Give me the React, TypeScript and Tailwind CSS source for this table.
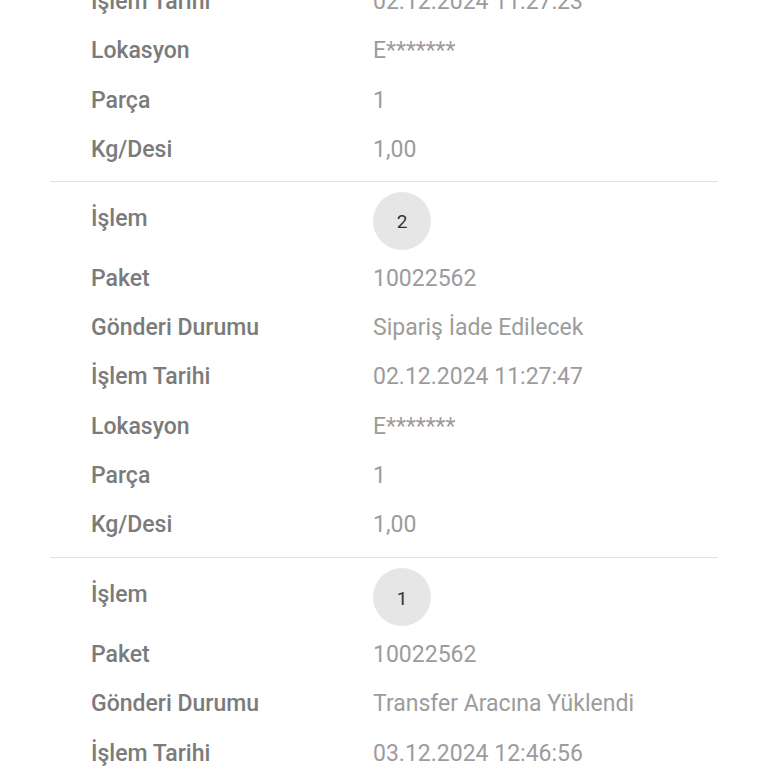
import React from "react";

type Row = [string, string];

const Label = ({ children }: { children: React.ReactNode }) => (
  <div className="w-[282px] shrink-0 text-[23px] font-medium text-[#7b7b7b]">{children}</div>
);
const Value = ({ children }: { children: React.ReactNode }) => (
  <div className="text-[23px] font-normal text-[#9c9c9c]">{children}</div>
);

function Rows({ rows }: { rows: Row[] }) {
  return (
    <>
      {rows.map(([l, v], i) => (
        <div key={i} className="flex h-[49.4px] items-center pl-[41px]">
          <Label>{l}</Label>
          <Value>{v}</Value>
        </div>
      ))}
    </>
  );
}

function Section({ n, rows }: { n: number; rows: Row[] }) {
  return (
    <div className="border-t border-[#e3e3e3] pb-[7px]">
      <div className="flex h-[72px] pl-[41px] pt-[10px]">
        <div className="w-[282px] shrink-0 pt-[10px] text-[23px] font-medium text-[#7b7b7b]">İşlem</div>
        <div className="flex h-[58px] w-[58px] items-center justify-center rounded-full bg-[#e6e6e6] pt-[3px] text-[19px] text-[#333]">
          {n}
        </div>
      </div>
      <Rows rows={rows} />
    </div>
  );
}

export default function App() {
  return (
    <div
      className="h-[768px] w-[768px] overflow-hidden bg-white"
      style={{ fontFamily: "Roboto, 'Noto Sans', sans-serif" }}
    >
      <div className="mx-[50px] -mt-[22.5px]">
        <div className="pb-[6px]">
          <Rows
            rows={[
              ["İşlem Tarihi", "02.12.2024 11:27:23"],
              ["Lokasyon", "E*******"],
              ["Parça", "1"],
              ["Kg/Desi", "1,00"],
            ]}
          />
        </div>
        <Section
          n={2}
          rows={[
            ["Paket", "10022562"],
            ["Gönderi Durumu", "Sipariş İade Edilecek"],
            ["İşlem Tarihi", "02.12.2024 11:27:47"],
            ["Lokasyon", "E*******"],
            ["Parça", "1"],
            ["Kg/Desi", "1,00"],
          ]}
        />
        <Section
          n={1}
          rows={[
            ["Paket", "10022562"],
            ["Gönderi Durumu", "Transfer Aracına Yüklendi"],
            ["İşlem Tarihi", "03.12.2024 12:46:56"],
            ["Lokasyon", "E*******"],
          ]}
        />
      </div>
    </div>
  );
}
